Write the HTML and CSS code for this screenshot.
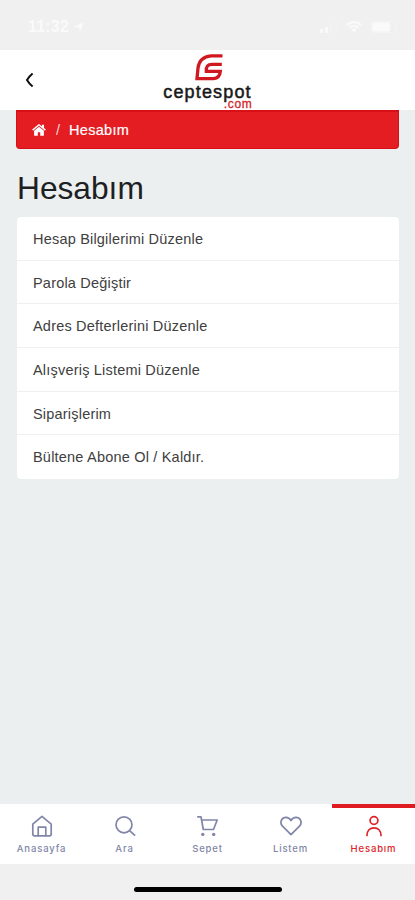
FILE: index.html
```html
<!DOCTYPE html>
<html lang="tr">
<head>
<meta charset="utf-8">
<meta name="viewport" content="width=device-width, initial-scale=1">
<title>Hesabım</title>
<link rel="stylesheet" href="styles.css">
</head>
<body>
<div class="app">
  <div class="status">
    <div class="status-time"><span>11:32</span>
      <svg width="12" height="12" viewBox="0 0 12 12"><path d="M1 5.5 10.5 1.5 7 11 6 6.5Z" fill="currentColor"/></svg>
    </div>
    <div class="status-icons">
      <svg width="19" height="12" viewBox="0 0 19 12" fill="currentColor"><rect x="0" y="8" width="3" height="4" rx="1"/><rect x="5" y="6" width="3" height="6" rx="1"/><rect x="10" y="3" width="3" height="9" rx="1" opacity=".2"/><rect x="15" y="0" width="3" height="12" rx="1" opacity=".2"/></svg>
      <svg width="16" height="12" viewBox="0 0 16 12" fill="none" stroke="currentColor" stroke-width="2.2"><path d="M1 4a10 10 0 0 1 14 0M3.5 6.8a6.5 6.5 0 0 1 9 0"/><path d="M5.5 8.8a3.6 3.6 0 0 1 5 0L8 11.5Z" fill="currentColor" stroke="none"/></svg>
      <svg width="29" height="12" viewBox="0 0 29 12"><rect x=".5" y=".5" width="25" height="11" rx="3" fill="none" stroke="currentColor" opacity=".4"/><rect x="2" y="1.5" width="18" height="9" rx="1.5" fill="currentColor"/><path d="M27 4v4" stroke="currentColor" opacity=".4"/></svg>
    </div>
  </div>
  <header class="header">
    <a class="back" aria-label="Geri"><svg width="10" height="16" viewBox="0 0 10 16"><path d="M7.6 1.5Q4 4.5 2 8 4 11.500 7.600 14.500" fill="none" stroke="#111" stroke-width="2"/></svg></a>
    <div class="logo">
      <svg class="logo-mark" width="28" height="28" viewBox="0 0 28 28" fill="none" stroke="#cf1820" stroke-width="3.300"><path d="M27.500 1.900H16Q4.500 3 3 14L2 24.600H18.500Q24.800 24 25.300 17.300H11.300Q10.700 10.300 17 10.300H26.800"/></svg>
      <span class="logo-name">ceptespot</span>
      <span class="logo-tld">.com</span>
    </div>
  </header>
  <main class="main">
    <nav class="crumbs">
      <svg width="14" height="12" viewBox="0 0 14 12" fill="#fff"><path d="M7 2.700 2.100 6.800V11.200q0 .6.6.6H5.800V8.300H8.200V11.800h3.100q.6 0 .6-.6V6.800Z"/><path d="M.6 6.100 7 .8 13.400 6.100" fill="none" stroke="#fff" stroke-width="1.400"/><path d="M10 .8h2v4l-2-1.600Z"/></svg>
      <span class="slash">/</span><span class="crumb">Hesabım</span>
    </nav>
    <h1 class="title">Hesabım</h1>
    <ul class="list">
      <li><span>Hesap Bilgilerimi Düzenle</span></li>
      <li><span>Parola Değiştir</span></li>
      <li><span>Adres Defterlerini Düzenle</span></li>
      <li><span>Alışveriş Listemi Düzenle</span></li>
      <li><span>Siparişlerim</span></li>
      <li><span>Bültene Abone Ol / Kaldır.</span></li>
    </ul>
  </main>
  <nav class="tabs">
    <a class="tab"><svg width="24" height="24" viewBox="0 0 24 24"><path d="M2.800 10.200 12 2.300l9.200 7.900v9.800q0 1.800-1.800 1.800H4.600q-1.800 0-1.800-1.800Z"/><path d="M8.200 21.500v-8.300h7.600v8.300"/></svg><span>Anasayfa</span></a>
    <a class="tab"><svg width="24" height="24" viewBox="0 0 24 24"><circle cx="11" cy="10.800" r="8"/><path d="m16.800 16.800 4.800 4.400"/></svg><span>Ara</span></a>
    <a class="tab"><svg width="24" height="24" viewBox="0 0 24 24"><path d="M1.800 2.800H5l2.300 12.700h10.200L21.200 6H5.800"/><circle class="dot" cx="6.800" cy="20.400" r="1.700"/><circle class="dot" cx="17.700" cy="20.400" r="1.700"/></svg><span>Sepet</span></a>
    <a class="tab"><svg width="24" height="24" viewBox="0 0 24 24"><path d="M12 20.600 3.500 12.200C-.1 7.800 3.200 3.400 7 3.400c2.500 0 4 1.300 5 3.100 1-1.800 2.500-3.100 5-3.100 3.800 0 7.100 4.400 3.500 8.800Z"/></svg><span>Listem</span></a>
    <a class="tab active"><svg width="24" height="24" viewBox="0 0 24 24"><circle cx="12" cy="6.500" r="3.900"/><path d="M5 21.500c0-5 3-7.700 7-7.700s7 2.700 7 7.700"/></svg><span>Hesabım</span></a>
  </nav>
  <div class="home"><div class="home-bar"></div></div>
</div>
</body>
</html>
```
FILE: styles.css
```css
* { box-sizing: border-box; }
body { margin: 0; font-family: "Liberation Sans", Arial, sans-serif; background: #ebeff0; }
.app { width: 415px; height: 900px; display: flex; flex-direction: column; overflow: hidden; }
.status { height: 50px; background: #f0f0f0; color: #fafafa; display: flex; justify-content: space-between; padding: 20px 16px 0 28px; }
.status-time { display: flex; gap: 4px; align-items: center; height: 14px; font-size: 16px; font-weight: 700; letter-spacing: .2px; }
.status-icons { display: flex; gap: 8px; align-items: center; height: 14px; }
.status-icons svg:first-child { margin-right: -1px; }
.header { height: 60px; flex: none; background: #fff; display: grid; grid-template-columns: 1fr 90px 1fr; }
.back { padding: 22px 0 0 25px; }
.logo { display: flex; flex-direction: column; align-items: center; padding-top: 4px; }
.logo-mark { flex: none; margin-left: 2px; }
.logo-name { font-size: 18px; line-height: 18px; margin-top: 1px; color: #181818; -webkit-text-stroke: .5px #181818; letter-spacing: 1.150px; }
.logo-tld { font-size: 12px; line-height: 10px; margin-top: -2px; align-self: flex-end; color: #d1262d; -webkit-text-stroke: .3px #d1262d; letter-spacing: .7px; }
.main { flex: 1; padding: 0 16px; }
.crumbs { height: 39px; background: #e31d22; border: 1px solid #d90f17; border-top-width: 2px; border-radius: 0 0 4px 4px; display: flex; align-items: center; color: #fff; font-size: 14.500px; padding-left: 15px; }
.slash { margin: 0 9px 0 10px; opacity: .8; }
.crumb { -webkit-text-stroke: .2px #fff; letter-spacing: .3px; }
.title { margin: 21px 0 0 1px; font-size: 31.700px; line-height: 36px; font-weight: 400; color: #1d2022; }
.list { list-style: none; margin: 11px 0 0 1px; padding: 0; background: #fff; border-radius: 4px; }
.list li { height: 43.700px; padding: 0 16px; border-bottom: 1px solid #eef0f1; font-size: 14.500px; line-height: 44px; color: #404040; letter-spacing: .2px; }
.list li:last-child { border-bottom: 0; }
.tabs { height: 60px; flex: none; background: #fff; display: grid; grid-template-columns: repeat(5, 1fr); }
.tab { display: flex; flex-direction: column; align-items: center; padding-top: 10px; color: #8186a8; font-family: Inter, sans-serif; font-size: 9.500px; font-weight: 500; letter-spacing: .85px; line-height: 12px; }
.tab svg { fill: none; stroke: currentColor; stroke-width: 1.700; stroke-linejoin: round; stroke-linecap: round; margin-bottom: 5px; }
.tab .dot { fill: currentColor; stroke: none; }
.active { color: #dc2328; border-top: 4px solid #df1c22; padding-top: 6px; }
.home { height: 36px; flex: none; background: #f0f0f0; display: flex; justify-content: center; padding-top: 23px; }
.home-bar { width: 148px; height: 5px; border-radius: 3px; background: #000; }
```
